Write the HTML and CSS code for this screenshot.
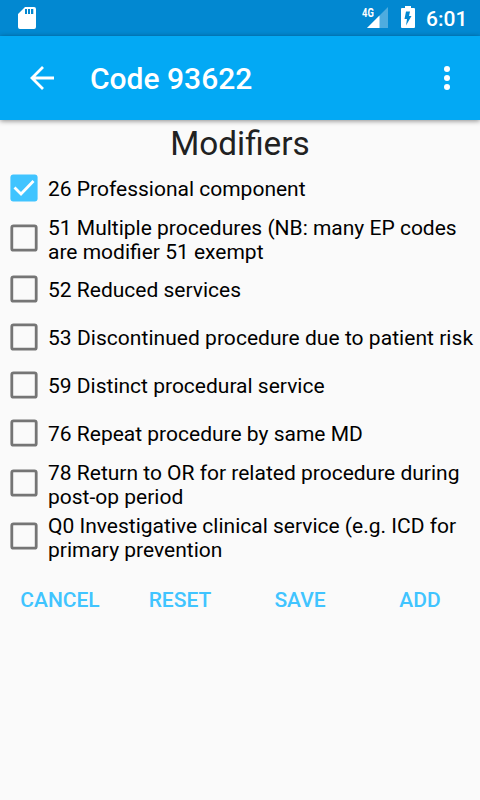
FILE: index.html
```html
<!DOCTYPE html>
<html lang="en">
<head>
<meta charset="utf-8">
<title>Code 93622</title>
<link rel="stylesheet" href="styles.css">
</head>
<body>
<div class="status">
  <svg class="sd" width="18" height="22" viewBox="0 0 18 22"><path fill="#fff" fill-rule="evenodd" d="M7 0H16Q18 0 18 2V20Q18 22 16 22H2Q0 22 0 20V7ZM7 2V7H9V2ZM10 2V7H12V2ZM13 2V7H15.300V2Z"/></svg>
  <span class="net">4G</span>
  <svg class="signal" width="21" height="21" viewBox="0 0 21 21"><path fill="#fff" opacity=".3" d="M21 0V21H0Z"/><path fill="#fff" d="M12.500 8.500V21H0Z"/></svg>
  <svg class="battery" width="14" height="22" viewBox="0 0 14 22"><path fill="#fff" fill-rule="evenodd" d="M4 0H10V2H13Q14 2 14 3V21Q14 22 13 22H1Q0 22 0 21V3Q0 2 1 2H4ZM9 5.500H5L3.500 13H6L5 19.500L10.500 10H8Z"/></svg>
  <span class="clock">6:01</span>
</div>
<header class="bar">
  <svg class="back" width="24" height="24" viewBox="0 0 24 24"><path d="M24 12H2M13 1L2 12L13 23" fill="none" stroke="#fff" stroke-width="2.8"/></svg>
  <h1>Code 93622</h1>
  <svg class="more" width="6" height="24" viewBox="0 0 6 24" fill="#fff"><circle cx="3" cy="3" r="3"/><circle cx="3" cy="12" r="3"/><circle cx="3" cy="21" r="3"/></svg>
</header>
<main>
  <h2>Modifiers</h2>
  <div class="row"><svg class="box" width="28" height="28" viewBox="0 0 28 28"><rect class="fill" x=".4" y=".4" width="27.200" height="27.200" rx="3"/><path class="tick" d="M4.500 13.500L11 20L23.500 7"/></svg><span>26 Professional component</span></div>
  <div class="row two"><svg class="box" width="28" height="28" viewBox="0 0 28 28"><rect class="line" x="1.800" y="1.800" width="24.400" height="24.400" rx="1.800"/></svg><span>51 Multiple procedures (NB: many EP codes<br>are modifier 51 exempt</span></div>
  <div class="row"><svg class="box" width="28" height="28" viewBox="0 0 28 28"><rect class="line" x="1.800" y="1.800" width="24.400" height="24.400" rx="1.800"/></svg><span>52 Reduced services</span></div>
  <div class="row"><svg class="box" width="28" height="28" viewBox="0 0 28 28"><rect class="line" x="1.800" y="1.800" width="24.400" height="24.400" rx="1.800"/></svg><span class="wide">53 Discontinued procedure due to patient risk</span></div>
  <div class="row"><svg class="box" width="28" height="28" viewBox="0 0 28 28"><rect class="line" x="1.800" y="1.800" width="24.400" height="24.400" rx="1.800"/></svg><span>59 Distinct procedural service</span></div>
  <div class="row"><svg class="box" width="28" height="28" viewBox="0 0 28 28"><rect class="line" x="1.800" y="1.800" width="24.400" height="24.400" rx="1.800"/></svg><span>76 Repeat procedure by same MD</span></div>
  <div class="row two"><svg class="box" width="28" height="28" viewBox="0 0 28 28"><rect class="line" x="1.800" y="1.800" width="24.400" height="24.400" rx="1.800"/></svg><span>78 Return to OR for related procedure during<br>post-op period</span></div>
  <div class="row two"><svg class="box" width="28" height="28" viewBox="0 0 28 28"><rect class="line" x="1.800" y="1.800" width="24.400" height="24.400" rx="1.800"/></svg><span>Q0 Investigative clinical service (e.g. ICD for<br>primary prevention</span></div>
  <div class="actions"><b>CANCEL</b><b>RESET</b><b>SAVE</b><b>ADD</b></div>
</main>
</body>
</html>
```
FILE: styles.css
```css
* { box-sizing: border-box; }
body { margin: 0; width: 480px; height: 800px; overflow: hidden; background: #fafafa; color: #000; font-family: Roboto, sans-serif; }
svg { display: block; flex: none; }
.status { height: 36px; background: #0288d1; color: #fff; display: flex; padding-left: 18px; }
.sd { margin-top: 7px; }
.net { width: 14px; margin: 5px 0 0 326px; font: 700 12.5px/15px Roboto, sans-serif; white-space: nowrap; transform: scaleX(.75); transform-origin: left; }
.signal { margin: 7px 0 0 -9px; }
.battery { margin: 6px 0 0 13px; }
.clock { margin-left: 11px; font-size: 21px; font-weight: 500; line-height: 38px; }
.bar { height: 84px; background: #03a9f4; color: #fff; display: flex; align-items: center; padding: 0 30px; box-shadow: 0 1px 5px rgba(0,0,0,.45); }
h1 { flex: 1; margin: 2px 0 0 36px; font-size: 30px; font-weight: 500; line-height: 36px; }
h2 { margin: 0; padding-top: 4px; height: 44px; font-size: 33.3px; line-height: 40px; font-weight: 400; text-align: center; color: #212121; }
.row { height: 48px; display: flex; align-items: center; padding-left: 10px; font-size: 21px; line-height: 24px; white-space: nowrap; }
.row span { padding-top: 2px; }
.two { height: 53px; }
.box { margin-right: 10px; }
.two .box { margin-bottom: 1px; }
.line { fill: none; stroke: #757575; stroke-width: 2.8; }
.fill { fill: #40c4ff; }
.tick { fill: none; stroke: #fff; stroke-width: 2.8; }
.wide { letter-spacing: .04px; }
.actions { display: flex; margin-top: 1px; height: 72px; }
.actions b { flex: 1; text-align: center; font-size: 21px; font-weight: 500; line-height: 72px; color: #40c4ff; }
```
